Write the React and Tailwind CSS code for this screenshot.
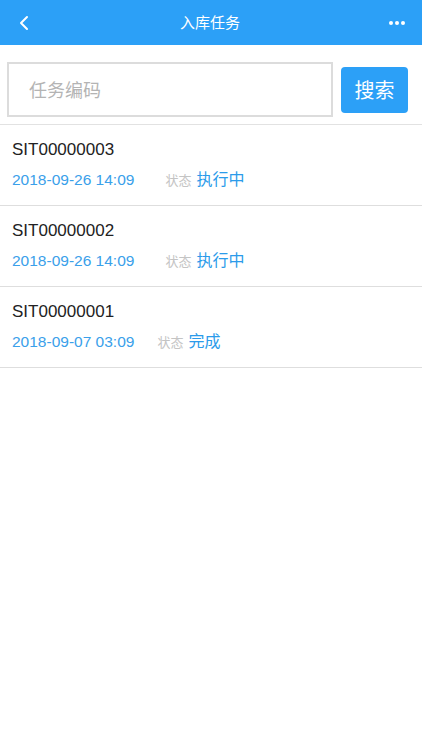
import React from 'react';

const tasks = [
    { code: 'SIT00000003', time: '2018-09-26 14:09', status: '执行中', gap: 'ml-[31px]' },
    { code: 'SIT00000002', time: '2018-09-26 14:09', status: '执行中', gap: 'ml-[31px]' },
    { code: 'SIT00000001', time: '2018-09-07 03:09', status: '完成', gap: 'ml-[23px]' },
];

const App = () => {
    return (
        <div className="w-[422px] min-h-[750px] bg-white font-['Noto_Sans_CJK_SC','Noto_Sans',sans-serif]">
            <div className="h-[45px] bg-[#2ca0f7] flex items-center justify-between px-[16px] text-white">
                <svg width="14" height="20" viewBox="0 0 14 20" fill="none" className="ml-[1px]">
                    <path d="M10 4 L4 10 L10 16" stroke="white" strokeWidth="2" strokeLinecap="round" strokeLinejoin="round" />
                </svg>
                <span className="text-[15px]">入库任务</span>
                <div className="flex gap-[2px] mr-[1px]">
                    <span className="w-[4px] h-[4px] rounded-full bg-white" />
                    <span className="w-[4px] h-[4px] rounded-full bg-white" />
                    <span className="w-[4px] h-[4px] rounded-full bg-white" />
                </div>
            </div>

            <div className="flex items-center pl-[7px] pr-[14px] pt-[17px] pb-[7px] gap-[8px] border-b border-[#e2e2e2]">
                <div className="flex-1 h-[55px] border-2 border-[#dcdcdc] flex items-center px-[20px]">
                    <span className="text-[18px] text-[#b4b4b4]">任务编码</span>
                </div>
                <button className="w-[67px] h-[46px] rounded-[4px] bg-[#2ca0f7] text-white text-[20px]">搜索</button>
            </div>

            {tasks.map(t => (
                <div key={t.code} className="h-[81px] border-b border-[#dedede] px-[12px] pt-[13px]">
                    <div className="text-[17px] text-[#222] leading-[24px] font-['Liberation_Sans',sans-serif]">{t.code}</div>
                    <div className="flex items-baseline mt-[4px]">
                        <span className="text-[15.5px] text-[#3aa0ea] font-['Liberation_Sans',sans-serif]">{t.time}</span>
                        <span className={`text-[13px] text-[#c4c4c4] ${t.gap}`}>状态</span>
                        <span className="text-[16px] text-[#2b9bea] ml-[5px]">{t.status}</span>
                    </div>
                </div>
            ))}
        </div>
    );
};

export default App;
